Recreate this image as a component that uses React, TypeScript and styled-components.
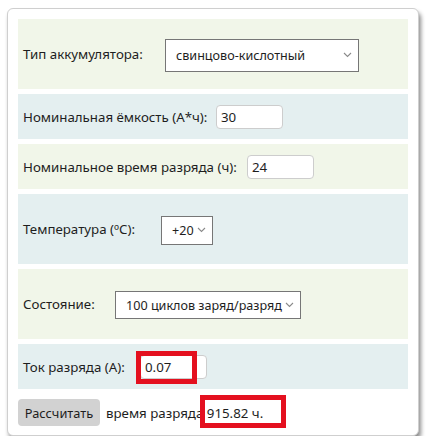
import React, { FC } from 'react';
import styled, { createGlobalStyle } from 'styled-components';

const Global = createGlobalStyle`
  html, body {
    margin: 0;
    padding: 0;
    background: #fff;
  }
  body {
    font-family: "Noto Sans", "Open Sans", Arial, sans-serif;
    font-size: 13.3px;
    color: #1e1e1e;
  }
`;

const Card = styled.div`
  margin: 8px 0 0 7px;
  width: 390px;
  padding: 10px 10px 9px;
  border: 1px solid #cfcfcf;
  border-radius: 6px;
  box-shadow: 2px 4px 4px rgba(0, 0, 0, 0.45);
  background: #fff;
  display: flex;
  flex-direction: column;
  gap: 5px;
`;

const Row = styled.div<{ $tall?: boolean; $tone: 'green' | 'blue' }>`
  height: ${p => (p.$tall ? 70 : 45)}px;
  background: ${p => (p.$tone === 'green' ? '#f1f6e9' : '#e4eff0')};
  display: flex;
  align-items: center;
  padding: 0 5px;
  box-sizing: border-box;
`;

const Label = styled.span<{ $w: number }>`
  width: ${p => p.$w}px;
  flex-shrink: 0;
  white-space: nowrap;
`;

const SelectBox = styled.div<{ $w: number; $h: number }>`
  width: ${p => p.$w}px;
  height: ${p => p.$h}px;
  box-sizing: border-box;
  border: 1px solid #767676;
  background: #fff;
  display: flex;
  align-items: center;
  justify-content: space-between;
  padding: 0 6px 0 10px;
  white-space: nowrap;
  font-size: 12.6px;
  margin-top: 2px;
`;

const Chevron = () => (
  <svg width="9" height="6" viewBox="0 0 9 6" fill="none" style={{ flexShrink: 0 }}>
    <path d="M1 1l3.5 3.5L8 1" stroke="#8a8a8a" strokeWidth="1.1" />
  </svg>
);

const Field = styled.div`
  width: 67px;
  height: 24px;
  box-sizing: border-box;
  border: 1px solid #cdcdcd;
  border-radius: 4px;
  background: #fff;
  display: flex;
  align-items: center;
  padding-left: 4px;
`;

const Anchor = styled.div`
  position: relative;
`;

const Mark = styled.div<{ $l: number; $t: number; $w: number; $h: number }>`
  position: absolute;
  left: ${p => p.$l}px;
  top: ${p => p.$t}px;
  width: ${p => p.$w}px;
  height: ${p => p.$h}px;
  box-sizing: border-box;
  border: 5px solid #e4101f;
  pointer-events: none;
`;

const Footer = styled.div`
  display: flex;
  align-items: center;
  gap: 6px;
  margin-top: 5px;
`;

const Button = styled.button`
  height: 27px;
  width: 82px;
  border: none;
  border-radius: 4px;
  background: #d2d2d2;
  font: inherit;
  font-size: 12.8px;
  color: #1e1e1e;
  padding: 0;
  white-space: nowrap;
`;

const Outcome = styled.span`
  white-space: nowrap;
`;

const Result = styled.span`
  position: relative;
`;

const Sel: FC<{ w: number; h: number; value: string }> = ({ w, h, value }) => (
  <SelectBox $w={w} $h={h}>
    <span>{value}</span>
    <Chevron />
  </SelectBox>
);

export default function App() {
  return (
    <>
      <Global />
      <Card>
        <Row $tall $tone="green">
          <Label $w={142}>Тип аккумулятора:</Label>
          <Sel w={194} h={33} value="свинцово-кислотный" />
        </Row>
        <Row $tone="blue">
          <Label $w={193}>Номинальная ёмкость (А*ч):</Label>
          <Field>30</Field>
        </Row>
        <Row $tone="green">
          <Label $w={224}>Номинальное время разряда (ч):</Label>
          <Field>24</Field>
        </Row>
        <Row $tall $tone="blue">
          <Label $w={138}>Температура (ºC):</Label>
          <Sel w={52} h={29} value="+20" />
        </Row>
        <Row $tall $tone="green">
          <Label $w={92}>Состояние:</Label>
          <Sel w={186} h={28} value="100 циклов заряд/разряд" />
        </Row>
        <Row $tone="blue">
          <Label $w={117}>Ток разряда (А):</Label>
          <Anchor>
            <Field>0.07</Field>
            <Mark $l={-4} $t={-4} $w={61} $h={33} />
          </Anchor>
        </Row>
        <Footer>
          <Button>Рассчитать</Button>
          <Outcome>
            время разряда{' '}
            <Result>
              915.82 ч.
              <Mark $l={-7} $t={-9} $w={86} $h={33} />
            </Result>
          </Outcome>
        </Footer>
      </Card>
    </>
  );
}
